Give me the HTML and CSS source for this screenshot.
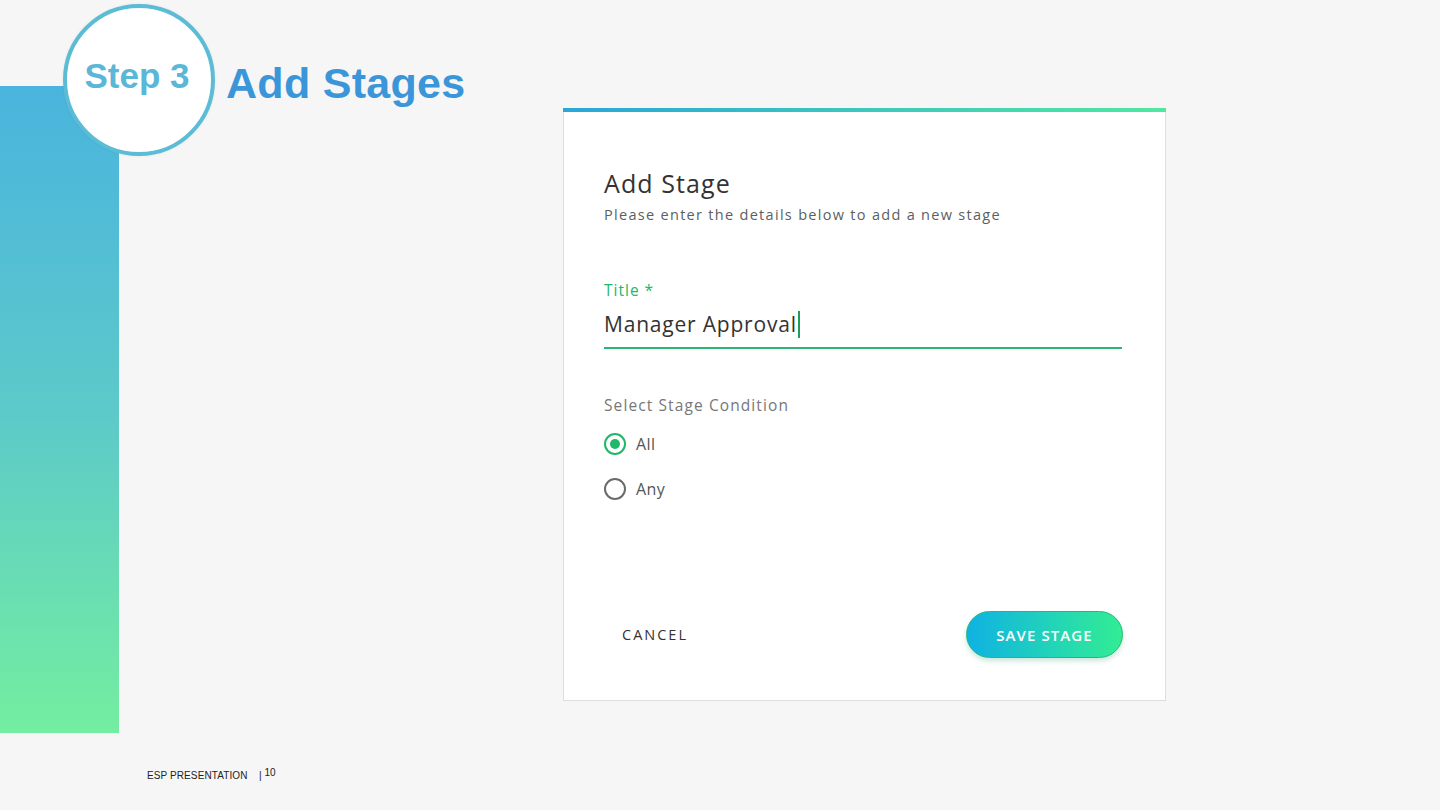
FILE: index.html
```html
<!DOCTYPE html>
<html lang="en">
<head>
<meta charset="utf-8">
<title>Step 3 Add Stages</title>
<link rel="stylesheet" href="styles.css">
</head>
<body>
<div class="page">
  <div class="sidebar"></div>
  <div class="content">
    <section class="card">
      <div class="card-bar"></div>
      <div class="card-body">
        <h2 class="card-title">Add Stage</h2>
        <p class="card-sub">Please enter the details below to add a new stage</p>
        <label class="field-label">Title *</label>
        <div class="field-input"><span class="field-value">Manager Approval</span><span class="caret"></span></div>
        <div class="group-label">Select Stage Condition</div>
        <div class="radio-row radio-first"><span class="radio checked"></span><span class="radio-text">All</span></div>
        <div class="radio-row"><span class="radio"></span><span class="radio-text">Any</span></div>
      </div>
      <div class="actions">
        <button class="btn-cancel">CANCEL</button>
        <button class="btn-save">SAVE STAGE</button>
      </div>
    </section>
    <footer class="footer"><span class="footer-name">ESP PRESENTATION</span><span class="footer-page">| <sup>10</sup></span></footer>
  </div>
  <header class="heading">
    <div class="step-circle"><span>Step 3</span></div>
    <h1 class="heading-title">Add Stages</h1>
  </header>
</div>
</body>
</html>
```
FILE: styles.css
```css
* { box-sizing: border-box; }
html, body { margin: 0; padding: 0; }
body { background: #f6f6f6; font-family: "Open Sans", "Noto Sans", sans-serif; }

.page {
  position: relative;
  width: 1440px;
  height: 810px;
  display: flex;
  background: #f6f6f6;
  overflow: hidden;
}

.sidebar {
  width: 119px;
  height: 647px;
  margin-top: 86px;
  flex: none;
  background: linear-gradient(180deg, #4ab4de 0%, #5cc9c9 50%, #74eea0 100%);
}

.content {
  flex: 1;
  display: flex;
  flex-direction: column;
  padding-top: 108px;
  padding-left: 444px;
}

.heading {
  position: absolute;
  left: 63px;
  top: 4px;
  display: flex;
  align-items: center;
  gap: 11px;
}

.step-circle {
  width: 152px;
  height: 152px;
  border-radius: 50%;
  border: 4px solid #5bbcd6;
  background: #fff;
  display: flex;
  align-items: center;
  justify-content: center;
  box-shadow: 0 0 3px rgba(0,0,0,0.08);
}
.step-circle span {
  font-family: "Liberation Sans", Arial, sans-serif;
  font-weight: bold;
  font-size: 35px;
  color: #5ab7d7;
  margin-top: -8px;
  margin-left: -4px;
}

.heading-title {
  margin: 6px 0 0 0;
  font-family: "Liberation Sans", Arial, sans-serif;
  font-weight: bold;
  font-size: 43px;
  color: #3b96d9;
  letter-spacing: 0.3px;
}

.card {
  width: 603px;
  height: 593px;
  background: #fff;
  border: 1px solid #dedede;
  border-top: none;
  display: flex;
  flex-direction: column;
}
.card-bar {
  height: 4px;
  margin: 0 -1px;
  background: linear-gradient(90deg, #2aa6d8 0%, #3cc8bc 50%, #50e8a0 100%);
}
.card-body {
  padding: 55px 43px 0 40px;
  display: flex;
  flex-direction: column;
}
.card-title {
  margin: 0;
  font-size: 25px;
  line-height: 32px;
  font-weight: 400;
  color: #333;
  letter-spacing: 1.1px;
}
.card-sub {
  margin: 6px 0 0 0;
  font-size: 14.5px;
  line-height: 20px;
  color: #5a5f63;
  letter-spacing: 1.3px;
}
.field-label {
  margin-top: 55px;
  font-size: 15.5px;
  line-height: 20px;
  color: #22b86a;
  letter-spacing: 1px;
}
.field-input {
  margin-top: 10px;
  height: 39px;
  display: flex;
  align-items: flex-start;
  border-bottom: 2px solid #2bb673;
}
.field-value {
  font-size: 21px;
  line-height: 28px;
  color: #333;
  letter-spacing: 0.8px;
}
.caret {
  width: 2px;
  height: 27px;
  background: #1f9e5a;
  margin-top: 1px;
  margin-left: 1px;
}
.group-label {
  margin-top: 46px;
  font-size: 15.5px;
  line-height: 20px;
  color: #777;
  letter-spacing: 1.1px;
}
.radio-row {
  display: flex;
  align-items: center;
  gap: 10px;
  height: 24px;
  margin-top: 21px;
}
.radio-first { margin-top: 17px; }
.radio {
  width: 22px;
  height: 22px;
  border-radius: 50%;
  border: 2px solid #6b6b6b;
  display: flex;
  align-items: center;
  justify-content: center;
  flex: none;
}
.radio.checked { border-color: #1fb868; }
.radio.checked::after {
  content: "";
  width: 10px;
  height: 10px;
  border-radius: 50%;
  background: #1fb868;
}
.radio-text {
  font-size: 16px;
  color: #555;
  letter-spacing: 0.4px;
}

.actions {
  margin-top: auto;
  padding: 0 42px 42px 40px;
  display: flex;
  align-items: center;
  justify-content: space-between;
}
.btn-cancel {
  border: none;
  background: transparent;
  padding: 0 18px;
  font-family: "Open Sans", "Noto Sans", sans-serif;
  font-size: 14.5px;
  letter-spacing: 2px;
  color: #333;
}
.btn-save {
  width: 157px;
  height: 47px;
  border-radius: 24px;
  border: 1px solid #22b877;
  background: linear-gradient(90deg, #0fb2e2 0%, #22d4b8 55%, #32ec94 100%);
  box-shadow: 0 3px 5px rgba(40, 160, 110, 0.25);
  color: #fff;
  font-family: "Open Sans", "Noto Sans", sans-serif;
  font-weight: 600;
  font-size: 15px;
  letter-spacing: 1.1px;
}

.footer {
  margin-top: 66px;
  margin-left: -416px;
  display: flex;
  align-items: baseline;
  font-family: "Liberation Sans", Arial, sans-serif;
  font-size: 10px;
  color: #222;
}
.footer-name { width: 112px; letter-spacing: 0.1px; }
.footer-page sup { font-size: 10px; vertical-align: 3px; }
```
